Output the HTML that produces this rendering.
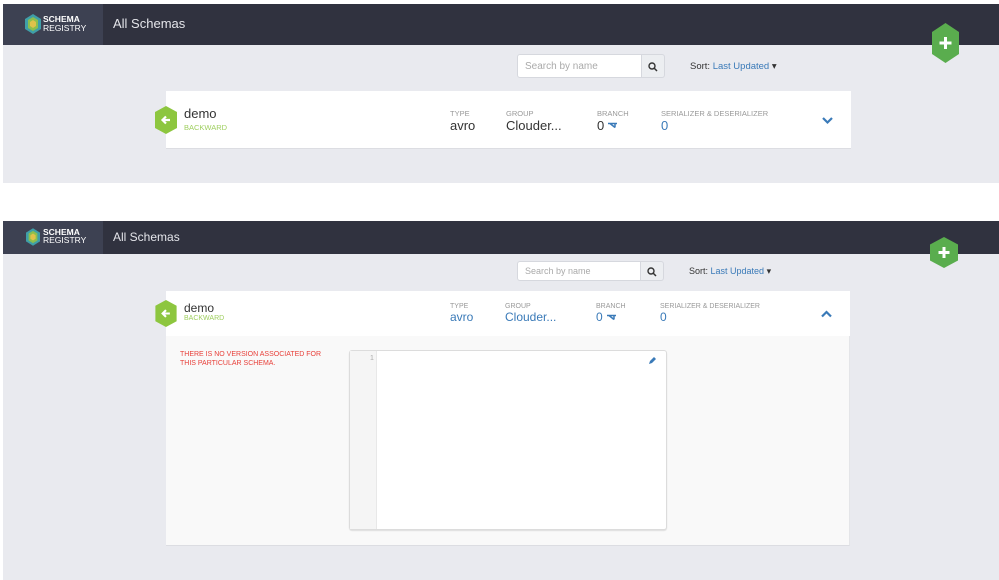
<!DOCTYPE html>
<html><head><style>
*{margin:0;padding:0;box-sizing:border-box}
body{width:999px;height:580px;background:#fff;position:relative;overflow:hidden;font-family:"Liberation Sans",sans-serif}
.a{position:absolute}
.nav{background:#30323f;left:3px;width:996px}
.logo{background:#3d4152;left:0;top:0;width:100px;height:100%}
.lt{color:#fff;font-size:8.5px;line-height:9px;position:absolute;left:40px}
.ttl{color:#e4e5ea;font-size:13px;position:absolute;left:110px}
.bodyg{background:#e9eaef;left:3px;width:996px}
.srch{background:#fff;border:1px solid #d6d8de;border-radius:3px 0 0 3px;color:#aaa;font-size:10px;padding-left:7px;display:flex;align-items:center}
.sbtn{background:#eceef1;border:1px solid #d6d8de;border-left:none;border-radius:0 3px 3px 0}
.sort{font-size:9.5px;color:#333}
.sort span{color:#3a7ab8}
.lbl{font-size:7.5px;color:#999}
.val{font-size:13px;color:#333}
.bl{color:#3a7ab8}
.demo{font-size:13px;color:#333}
.bw{font-size:7.5px;color:#9fcf5f}
</style></head><body>

<!-- TOP -->
<div class="a nav" style="top:4px;height:41px">
 <div class="a logo"></div>
 <svg class="a" style="left:22px;top:10px" width="16" height="20" viewBox="0 0 16 20"><polygon points="8,0 16,5 16,15 8,20 0,15 0,5" fill="#3f9fa8"/><polygon points="8,3 13,6 13,14 8,17 3,14 3,6" fill="#8cbf4e"/><polygon points="8,6 11,8 11,12 8,14 5,12 5,8" fill="#e0c24a"/></svg>
 <div class="lt" style="top:11px;font-weight:bold">SCHEMA</div>
 <div class="lt" style="top:20px">REGISTRY</div>
 <div class="ttl" style="top:12px">All Schemas</div>
</div>
<div class="a bodyg" style="top:45px;height:138px"></div>
<svg class="a" style="left:932px;top:23px" width="27" height="40" viewBox="0 0 27 40"><polygon points="13.5,0 27,9 27,31 13.5,40 0,31 0,9" fill="#5aad4e"/><path d="M13.5 14v12M7.5 20h12" stroke="#fff" stroke-width="3"/></svg>
<div class="a srch" style="left:517px;top:54px;width:125px;height:24px">Search by name</div>
<div class="a sbtn" style="left:642px;top:54px;width:23px;height:24px"><svg class="a" style="left:6px;top:7px" width="10" height="10"><circle cx="4" cy="4" r="3" fill="none" stroke="#333" stroke-width="1.4"/><path d="M6 6l3 3" stroke="#333" stroke-width="1.5"/></svg></div>
<div class="a sort" style="left:690px;top:61px">Sort: <span>Last Updated</span> ▾</div>
<div class="a" style="left:166px;top:91px;width:685px;height:58px;background:#fff;border-bottom:1px solid #dcdde2"></div>
<svg class="a" style="left:155px;top:106px" width="22" height="28" viewBox="0 0 22 28"><polygon points="11,0 22,6 22,22 11,28 0,22 0,6" fill="#8dc63f"/><path d="M15 14H8M11 10.5L7.5 14 11 17.5" stroke="#fff" stroke-width="2.2" fill="none"/></svg>
<div class="a demo" style="left:184px;top:106px">demo</div>
<div class="a bw" style="left:184px;top:123px">BACKWARD</div>
<div class="a lbl" style="left:450px;top:109px">TYPE</div>
<div class="a val" style="left:450px;top:118px">avro</div>
<div class="a lbl" style="left:506px;top:109px">GROUP</div>
<div class="a val" style="left:506px;top:118px">Clouder...</div>
<div class="a lbl" style="left:597px;top:109px">BRANCH</div>
<div class="a val" style="left:597px;top:118px">0</div>
<svg class="a" style="left:607px;top:122px" width="11" height="7"><path d="M1 1.5h9M3 1.5l5 4M8 1.5v4" stroke="#3a7ab8" stroke-width="1.5" fill="none"/></svg>
<div class="a lbl" style="left:661px;top:109px">SERIALIZER &amp; DESERIALIZER</div>
<div class="a val bl" style="left:661px;top:118px">0</div>
<svg class="a" style="left:822px;top:117px" width="11" height="8"><path d="M1 1l4.5 4.5L10 1" stroke="#3a7ab8" stroke-width="2.2" fill="none"/></svg>

<!-- BOTTOM -->
<div class="a nav" style="top:221px;height:33px">
 <div class="a logo"></div>
 <svg class="a" style="left:23px;top:7px" width="14" height="18" viewBox="0 0 16 20"><polygon points="8,0 16,5 16,15 8,20 0,15 0,5" fill="#3f9fa8"/><polygon points="8,3 13,6 13,14 8,17 3,14 3,6" fill="#8cbf4e"/><polygon points="8,6 11,8 11,12 8,14 5,12 5,8" fill="#e0c24a"/></svg>
 <div class="lt" style="top:7px;font-weight:bold">SCHEMA</div>
 <div class="lt" style="top:15px">REGISTRY</div>
 <div class="ttl" style="top:9px;font-size:12px">All Schemas</div>
</div>
<div class="a bodyg" style="top:254px;height:326px"></div>
<svg class="a" style="left:930px;top:237px" width="28" height="31" viewBox="0 0 28 31"><polygon points="14,0 28,7.5 28,23.5 14,31 0,23.5 0,7.5" fill="#5aad4e"/><path d="M14 10v11M8.5 15.5h11" stroke="#fff" stroke-width="3"/></svg>
<div class="a srch" style="left:517px;top:261px;width:124px;height:20px;font-size:9px">Search by name</div>
<div class="a sbtn" style="left:641px;top:261px;width:23px;height:20px"><svg class="a" style="left:6px;top:5px" width="10" height="10"><circle cx="4" cy="4" r="3" fill="none" stroke="#333" stroke-width="1.4"/><path d="M6 6l3 3" stroke="#333" stroke-width="1.5"/></svg></div>
<div class="a sort" style="left:689px;top:266px;font-size:9px">Sort: <span>Last Updated</span> ▾</div>
<div class="a" style="left:166px;top:291px;width:684px;height:255px;background:#f9f9f9;border-bottom:1px solid #dcdde2;border-right:1px solid #e4e5e8"></div>
<div class="a" style="left:166px;top:291px;width:684px;height:45px;background:#fff"></div>
<svg class="a" style="left:155px;top:300px" width="22" height="27" viewBox="0 0 22 28"><polygon points="11,0 22,6 22,22 11,28 0,22 0,6" fill="#8dc63f"/><path d="M15 14H8M11 10.5L7.5 14 11 17.5" stroke="#fff" stroke-width="2.2" fill="none"/></svg>
<div class="a demo" style="left:184px;top:301px;font-size:12px">demo</div>
<div class="a bw" style="left:184px;top:315px;font-size:7px">BACKWARD</div>
<div class="a lbl" style="left:450px;top:303px;font-size:7px">TYPE</div>
<div class="a val bl" style="left:450px;top:310px;font-size:12px">avro</div>
<div class="a lbl" style="left:505px;top:303px;font-size:7px">GROUP</div>
<div class="a val bl" style="left:505px;top:310px;font-size:12px">Clouder...</div>
<div class="a lbl" style="left:596px;top:303px;font-size:7px">BRANCH</div>
<div class="a val bl" style="left:596px;top:310px;font-size:12px">0</div>
<svg class="a" style="left:606px;top:314px" width="11" height="7"><path d="M1 1.5h9M3 1.5l5 4M8 1.5v4" stroke="#3a7ab8" stroke-width="1.5" fill="none"/></svg>
<div class="a lbl" style="left:660px;top:303px;font-size:7px">SERIALIZER &amp; DESERIALIZER</div>
<div class="a val bl" style="left:660px;top:310px;font-size:12px">0</div>
<svg class="a" style="left:821px;top:310px" width="11" height="8"><path d="M1 6.5L5.5 2 10 6.5" stroke="#3a7ab8" stroke-width="2.2" fill="none"/></svg>
<div class="a" style="left:180px;top:350px;color:#e8403a;font-size:7px;line-height:9px">THERE IS NO VERSION ASSOCIATED FOR<br>THIS PARTICULAR SCHEMA.</div>
<div class="a" style="left:349px;top:350px;width:318px;height:180px;background:#fff;border:1px solid #dcdcdc;border-radius:3px;box-shadow:0 1px 1px #ddd"></div>
<div class="a" style="left:350px;top:351px;width:27px;height:178px;background:#f5f5f5;border-right:1px solid #e8e8e8"></div>
<div class="a" style="left:370px;top:355px;font-size:7px;color:#aaa">1</div>
<svg class="a" style="left:648px;top:356px" width="9" height="9"><path d="M1 8l1-3 4-4 2 2-4 4z" fill="#3a7ab8"/></svg>
</body></html>
